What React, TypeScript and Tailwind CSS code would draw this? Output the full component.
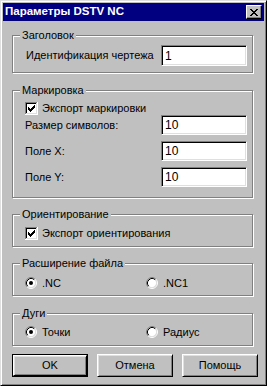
import React from "react";

const font = { fontFamily: '"Liberation Sans", Arial, sans-serif' };

const Group = ({ title, className, children }: { title: string; className: string; children?: React.ReactNode }) => (
  <div className={`relative w-[241px] border border-[#808080] shadow-[inset_1px_1px_0_#fff,1px_1px_0_#fff] ${className}`}>
    <span className="absolute left-[7px] top-[-8px] bg-[#c0c0c0] px-[2px] text-[11px] leading-[14px] text-black">
      {title}
    </span>
    {children}
  </div>
);

const Checkbox = () => (
  <svg width="13" height="13" viewBox="0 0 13 13" shapeRendering="crispEdges" className="shrink-0">
    <rect width="13" height="13" fill="#fff" />
    <path d="M0 0.5H12M0.5 0V12" stroke="#808080" />
    <path d="M1 1.5H11M1.5 1V11" stroke="#000" />
    <path d="M1 11.5H12M11.5 1V12" stroke="#dfdfdf" />
    <path d="M0 12.5H13M12.5 0V13" stroke="#fff" />
    <path d="M3 5H4V6H5V7H6V6H7V5H8V4H9V3H10V6H9V7H8V8H7V9H6V10H5V9H4V8H3Z" fill="#000" />
  </svg>
);

const Radio = ({ on }: { on?: boolean }) => (
  <svg width="12" height="12" viewBox="0 0 12 12" className="shrink-0">
    <circle cx="6" cy="6" r="4.5" fill="#fff" />
    <path d="M2.11 9.89A5.5 5.5 0 0 1 9.89 2.11" fill="none" stroke="#808080" />
    <path d="M9.89 2.11A5.5 5.5 0 0 1 2.11 9.89" fill="none" stroke="#fff" />
    <path d="M2.82 9.18A4.5 4.5 0 0 1 9.18 2.82" fill="none" stroke="#000" />
    <path d="M9.18 2.82A4.5 4.5 0 0 1 2.82 9.18" fill="none" stroke="#dfdfdf" />
    {on && <circle cx="6" cy="6" r="2" fill="#000" />}
  </svg>
);

const Field = ({ value, tall }: { value: string; tall?: boolean }) => (
  <div
    className={`ml-auto flex w-[86px] items-center border border-t-[#808080] border-l-[#808080] border-r-white border-b-white bg-white pl-[3px] text-[12px] shadow-[inset_1px_1px_0_#000,inset_-1px_-1px_0_#dfdfdf] ${
      tall ? "h-[21px]" : "h-[20px]"
    }`}
  >
    {value}
  </div>
);

const Button = ({ label, def }: { label: string; def?: boolean }) => (
  <div className={`w-[76px] h-[23px] ${def ? "border border-black" : ""}`}>
    <div className="flex h-full w-full items-center justify-center border border-t-white border-l-white border-r-black border-b-black bg-[#c0c0c0] text-[11px] shadow-[inset_1px_1px_0_#dfdfdf,inset_-1px_-1px_0_#808080]">
      {label}
    </div>
  </div>
);

export default function App() {
  return (
    <div style={font} className="h-[386px] w-[267px] whitespace-nowrap border border-t-[#dfdfdf] border-l-[#dfdfdf] border-r-black border-b-black bg-[#c0c0c0] p-[2px] text-[11px] text-black shadow-[inset_1px_1px_0_#fff,inset_-1px_-1px_0_#808080]">
      <div className="flex h-[18px] items-center justify-between bg-[#000080] pl-[2px] pr-[2px]">
        <span className="text-[11.5px] font-bold text-white">Параметры DSTV NC</span>
        <div className="flex h-[14px] w-[16px] items-center justify-center border border-t-white border-l-white border-r-black border-b-black bg-[#c0c0c0] shadow-[inset_-1px_-1px_0_#808080]">
          <svg width="8" height="7" viewBox="0 0 8 7" shapeRendering="crispEdges">
            <path d="M0 0H2V1H3V2H5V1H6V0H8V1H7V2H6V3H5V4H6V5H7V6H8V7H6V6H5V5H3V6H2V7H0V6H1V5H2V4H3V3H2V2H1V1H0Z" fill="#000" />
          </svg>
        </div>
      </div>

      <div className="flex flex-col pl-[9px]">
        <Group title="Заголовок" className="mt-[14px] h-[38px]">
          <div className="flex items-center pl-[13px] pr-[5px] pt-[9px]">
            <span>Идентификация чертежа</span>
            <Field value="1" tall />
          </div>
        </Group>

        <Group title="Маркировка" className="mt-[17px] h-[108px]">
          <div className="flex flex-col pl-[12px] pr-[5px] pt-[11px]">
            <label className="flex h-[13px] items-center gap-[4px]">
              <Checkbox />
              <span>Экспорт маркировки</span>
            </label>
            <div className="flex flex-col gap-[6px]">
              <div className="flex h-[20px] items-center">
                <span>Размер символов:</span>
                <Field value="10" />
              </div>
              <div className="flex h-[20px] items-center">
                <span>Поле X:</span>
                <Field value="10" />
              </div>
              <div className="flex h-[20px] items-center">
                <span>Поле Y:</span>
                <Field value="10" />
              </div>
            </div>
          </div>
        </Group>

        <Group title="Ориентирование" className="mt-[16px] h-[33px]">
          <label className="mt-[12px] flex h-[13px] items-center gap-[4px] pl-[12px]">
            <Checkbox />
            <span>Экспорт ориентирования</span>
          </label>
        </Group>

        <Group title="Расширение файла" className="mt-[16px] h-[33px]">
          <div className="mt-[13px] flex h-[12px] items-center pl-[12px]">
            <label className="flex w-[121px] items-center gap-[5px]">
              <Radio on />
              <span>.NC</span>
            </label>
            <label className="flex items-center gap-[5px]">
              <Radio />
              <span>.NC1</span>
            </label>
          </div>
        </Group>

        <Group title="Дуги" className="mt-[17px] h-[33px]">
          <div className="mt-[12px] flex h-[12px] items-center pl-[12px]">
            <label className="flex w-[121px] items-center gap-[5px]">
              <Radio on />
              <span>Точки</span>
            </label>
            <label className="flex items-center gap-[5px]">
              <Radio />
              <span>Радиус</span>
            </label>
          </div>
        </Group>

        <div className="mt-[8px] flex gap-[9px]">
          <Button label="OK" def />
          <Button label="Отмена" />
          <Button label="Помощь" />
        </div>
      </div>
    </div>
  );
}
